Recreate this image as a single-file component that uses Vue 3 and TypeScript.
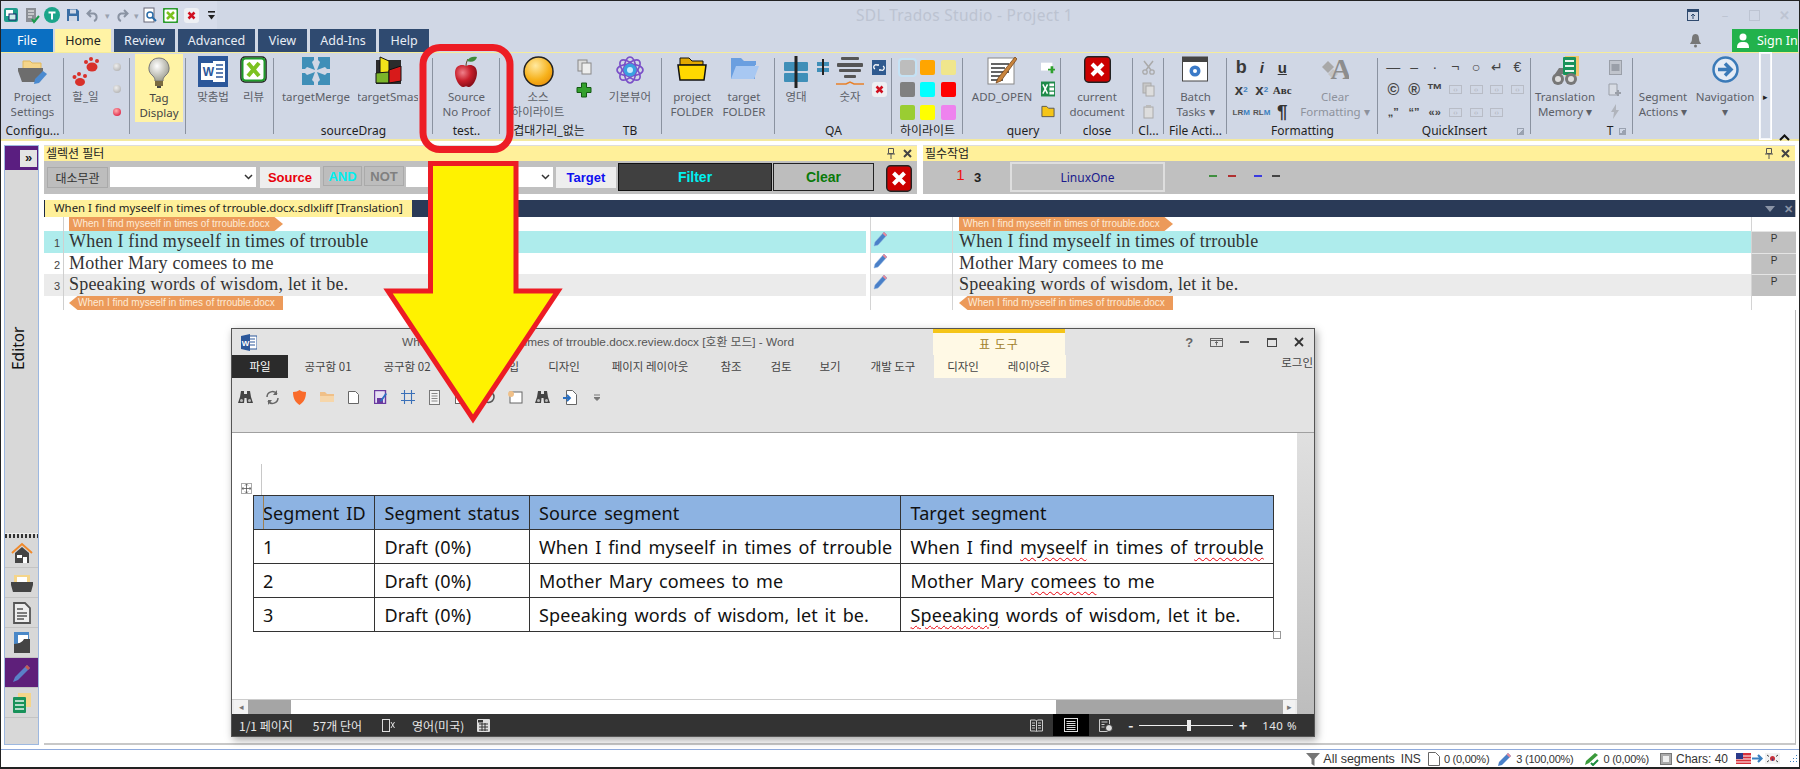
<script setup lang="ts">
const qi2 = ['©', '®', '™']
const qi1 = ['—', '–', '·', '¬', '○', '↵', '€']
const colors = ['#bdbdbd', '#ffa500', '#f0e68c', '#808080', '#00ffff', '#ff0000', '#9acd32', '#ffff00', '#ee82ee']
const flowerAngles = [0, 45, 90, 135]
const rows = [
  { n: 1, src: 'When I find myseelf in times of trrouble', cls: 'cur' },
  { n: 2, src: 'Mother Mary comees to me', cls: '' },
  { n: 3, src: 'Speeaking words of wisdom, let it be.', cls: 'alt' },
]
const tagText = 'When I find myseelf in times of trrouble.docx'
const wordTabs = [
  { t: '공구함 01', c: 'wt80' }, { t: '공구함 02', c: 'wt78' }, { t: '삽입', c: 'wt76 wr' },
  { t: '디자인', c: 'wt84' }, { t: '페이지 레이아웃', c: 'wt88' }, { t: '참조', c: 'wt74' },
  { t: '검토', c: 'wt26' }, { t: '보기', c: 'wt72' }, { t: '개발 도구', c: 'wt54' },
]
</script>

<template>
  <div class="app">
    <header class="titlebar">
      <div class="qat">
        <span class="q"><svg width="16" height="16" viewBox="0 0 16 16"><rect x="1" y="1" width="14" height="14" rx="2" fill="#1f9c8c"/><rect x="3" y="3" width="7" height="6" fill="#fff"/><rect x="6" y="7" width="7" height="6" fill="#cdeee8" stroke="#126"/></svg></span>
        <span class="q"><svg width="16" height="17" viewBox="0 0 16 17"><rect x="2" y="1" width="10" height="14" fill="#8b8f96"/><path d="M4 4h6M4 7h6M4 10h4" stroke="#fff"/><path d="M8 12l2 3 5-6" stroke="#1b9c4e" stroke-width="2" fill="none"/></svg></span>
        <span class="q"><svg width="16" height="16" viewBox="0 0 16 16"><circle cx="8" cy="8" r="8" fill="#1ba58a"/><path d="M4.500 4.500h7v2H9v6H7v-6H4.500z" fill="#fff"/></svg></span>
        <span class="q"><svg width="14" height="14" viewBox="0 0 14 14"><path d="M1 1h10l2 2v10H1z" fill="#3a6ea5"/><rect x="4" y="1.500" width="6" height="4" fill="#d0d7e5"/><rect x="3" y="8" width="8" height="5" fill="#d0d7e5"/></svg></span>
        <span class="q"><svg width="14" height="14" viewBox="0 0 14 14"><path d="M5 2L1.500 5.500 5 9M2 5.500h6a4 4 0 0 1 0 7.500" stroke="#8a93a3" stroke-width="2" fill="none"/></svg></span>
        <span class="q q-s">▾</span>
        <span class="q"><svg width="14" height="14" viewBox="0 0 14 14"><path d="M9 2l3.500 3.500L9 9M12 5.500H6a4 4 0 0 0 0 7.500" stroke="#8a93a3" stroke-width="2" fill="none"/></svg></span>
        <span class="q q-s">▾</span>
        <span class="q"><svg width="16" height="16" viewBox="0 0 16 16"><rect x="2" y="1" width="10" height="14" fill="#fff" stroke="#667"/><circle cx="8" cy="8" r="3" fill="none" stroke="#2a6ca8" stroke-width="1.500"/><path d="M10 10l4 4" stroke="#2a6ca8" stroke-width="2"/></svg></span>
        <span class="q"><svg width="15" height="15" viewBox="0 0 15 15"><rect x=".5" y=".5" width="14" height="14" rx="2" fill="#fff" stroke="#2c9b2c" stroke-width="2"/><path d="M4 4l7 7M11 4l-7 7" stroke="#7cc220" stroke-width="2.500"/></svg></span>
        <span class="q"><svg width="15" height="15" viewBox="0 0 15 15"><rect width="15" height="15" rx="3" fill="#eef0f4"/><path d="M4.500 4.500l6 6M10.500 4.500l-6 6" stroke="#d01020" stroke-width="2.500"/></svg></span>
        <span class="q"><svg width="7" height="9" viewBox="0 0 7 9"><rect y="0" width="7" height="1.600" fill="#222"/><path d="M0 4h7L3.500 8.500z" fill="#222"/></svg></span>
      </div>
      <div class="app-title">SDL Trados Studio - Project 1</div>
      <div class="win-btns">
        <svg class="w-pin" width="12" height="12" viewBox="0 0 12 12"><rect x=".5" y=".5" width="11" height="11" fill="none" stroke="#2f4a6e"/><rect x=".5" y=".5" width="11" height="2.500" fill="#2f4a6e"/><path d="M6 10V5M4 7l2-2 2 2" stroke="#2f4a6e" fill="none"/></svg>
        <span class="w-b">–</span>
        <span class="w-b w-box"></span>
        <span class="w-b w-x">✕</span>
      </div>
    </header>

    <nav class="tabs">
      <span class="tab file">File</span>
      <span class="tab home">Home</span>
      <span class="tab t-review">Review</span>
      <span class="tab t-adv">Advanced</span>
      <span class="tab t-view">View</span>
      <span class="tab t-add">Add-Ins</span>
      <span class="tab t-help">Help</span>
      <svg class="bell" width="13" height="15" viewBox="0 0 13 15"><path d="M6.500 1c-3 0-3.500 3-3.500 5 0 3-2 4-2 5h11c0-1-2-2-2-5 0-2-.5-5-3.500-5z" fill="#777"/><circle cx="6.500" cy="13" r="1.500" fill="#777"/></svg>
      <span class="signin">
        <svg width="12" height="15" viewBox="0 0 12 15"><circle cx="6" cy="4" r="3.500" fill="#fff"/><path d="M0 15c0-5 2-6 6-6s6 1 6 6z" fill="#fff"/></svg>
        <span>Sign In</span>
      </span>
    </nav>

    <section class="ribbon">
      <div class="grp g1 sep">
        <div class="body c">
          <div class="big">
            <div class="ico"><svg width="30" height="30" viewBox="0 0 30 30"><path d="M6 5h7l2 2h9v8H6z" fill="#f5d58a" stroke="#e0b860"/><path d="M1 12h25v3l-3 11H5L1 15z" fill="#6d6d6d"/><path d="M26 15l4 3-8 9-5 1 1-5z" fill="#4a8ad0"/></svg></div>
            <span>Project</span><span>Settings</span>
          </div>
        </div>
        <div class="glabel">Configu...</div>
      </div>

      <div class="grp g2 sep">
        <div class="body">
          <div class="big w43">
            <div class="ico"><svg width="28" height="32" viewBox="0 0 28 32"><g fill="#d8302a"><ellipse cx="20" cy="11" rx="5.500" ry="4.500"/><circle cx="14" cy="6" r="2"/><circle cx="19" cy="3" r="2"/><circle cx="25" cy="5" r="2"/></g><g fill="#d8302a"><ellipse cx="8" cy="26" rx="5" ry="4"/><circle cx="2.500" cy="21" r="2"/><circle cx="7" cy="18" r="2"/><circle cx="13" cy="20" r="2"/></g></svg></div>
            <span>할_일</span>
          </div>
          <div class="small w20">
            <i class="cell"><b class="led"></b></i>
            <i class="cell"><b class="led"></b></i>
            <i class="cell"><b class="led on"></b></i>
          </div>
        </div>
      </div>

      <div class="grp g3 sep">
        <div class="body tagbody">
          <div class="big tagbtn">
            <div class="ico"><svg width="22" height="32" viewBox="0 0 22 32"><defs><radialGradient id="bulb" cx=".4" cy=".35" r=".7"><stop offset="0" stop-color="#fff"/><stop offset="1" stop-color="#9a9a8c"/></radialGradient></defs><path d="M11 1a10 10 0 0 0-6 18c1.500 1.500 2 3 2 5h8c0-2 .5-3.500 2-5a10 10 0 0 0-6-18z" fill="url(#bulb)" stroke="#777"/><rect x="7" y="24" width="8" height="5" fill="#7a6a40"/><rect x="9" y="29" width="4" height="2" fill="#444"/></svg></div>
            <span>Tag</span><span>Display</span>
          </div>
        </div>
      </div>

      <div class="grp g4 sep">
        <div class="body">
          <div class="big w54">
            <div class="ico"><svg width="30" height="31" viewBox="0 0 30 31"><rect width="30" height="31" fill="#2b579a"/><rect x="15" y="5" width="12" height="21" fill="#fff"/><path d="M17 9h8M17 13h8M17 17h8M17 21h8" stroke="#2b579a" stroke-width="1.500"/><rect x="3" y="7" width="15" height="17" fill="#fff"/><text x="10.500" y="20" font-size="12" font-weight="700" fill="#2b579a" text-anchor="middle" font-family="Liberation Sans">W</text></svg></div>
            <span>맞춤법</span>
          </div>
          <div class="big w27">
            <div class="ico"><svg width="27" height="27" viewBox="0 0 27 27"><rect x="1" y="1" width="25" height="25" rx="4" fill="#fff" stroke="#1a1a1a" stroke-width="1.500"/><rect x="2.500" y="2.500" width="22" height="22" rx="3" fill="#fff" stroke="#1f9c2a" stroke-width="2"/><path d="M8 7l11 13M19 7L8 20" stroke="#7cc220" stroke-width="4"/></svg></div>
            <span>리뷰</span>
          </div>
        </div>
      </div>

      <div class="grp g5 sep">
        <div class="body">
          <div class="big w84">
            <div class="ico"><svg width="30" height="30" viewBox="0 0 30 30"><g fill="#3f8fb8"><path d="M1 1h12v3l-2 2 3 8-8-3-2 2H1z"/><path d="M29 1H17v3l2 2-3 8 8-3 2 2h3z"/><path d="M1 29h12v-3l-2-2 3-8-8 3-2-2H1z"/><path d="M29 29H17v-3l2-2-3-8 8 3 2-2h3z"/></g></svg></div>
            <span>targetMerge</span>
          </div>
          <div class="big w60">
            <div class="ico"><svg width="27" height="29" viewBox="0 0 27 29"><rect x="1" y="4" width="25" height="24" fill="#2c2c2c"/><path d="M5 1l9 4v12l-9 1z" fill="#f2e21a" stroke="#111"/><path d="M1 17l13-1v11H1z" fill="#7bb52a" stroke="#111"/><path d="M14 14l12-4v15l-12 2z" fill="#d81a1a" stroke="#111"/></svg></div>
            <span>targetSmas</span>
          </div>
        </div>
        <div class="glabel">sourceDrag</div>
      </div>

      <div class="grp g6 sep">
        <div class="body c">
          <div class="big">
            <div class="ico"><svg width="24" height="32" viewBox="0 0 24 32"><defs><radialGradient id="apple" cx=".35" cy=".35" r=".75"><stop offset="0" stop-color="#f0808a"/><stop offset=".5" stop-color="#c81e2a"/><stop offset="1" stop-color="#7a0a14"/></radialGradient></defs><path d="M12 10c-3-2-11-2-11 7 0 7 5 14 8 14 1 0 2-.8 3-.8s2 .8 3 .8c3 0 8-7 8-14 0-9-8-9-11-7z" fill="url(#apple)"/><path d="M12 10c0-3 1-5 2-7" stroke="#5a3a1a" fill="none"/><path d="M13 5c2-4 6-5 10-4-1 4-5 6-10 4z" fill="#3f8a3a"/></svg></div>
            <span>Source</span><span>No Proof</span>
          </div>
        </div>
        <div class="glabel">test..</div>
      </div>

      <div class="grp g7">
        <div class="body">
          <div class="big w76">
            <div class="ico"><svg width="31" height="31" viewBox="0 0 31 31"><defs><radialGradient id="sun" cx=".4" cy=".3" r=".8"><stop offset="0" stop-color="#ffe9a0"/><stop offset=".6" stop-color="#f7b21c"/><stop offset="1" stop-color="#e58a08"/></radialGradient></defs><circle cx="15.500" cy="15.500" r="14.500" fill="url(#sun)" stroke="#222" stroke-width="1.500"/></svg></div>
            <span>소스</span><span>하이라이트</span>
          </div>
          <div class="small w16">
            <i class="cell"><svg width="15" height="16" viewBox="0 0 15 16"><rect x="1" y="1" width="9" height="11" fill="#ddd" stroke="#888"/><rect x="5" y="4" width="9" height="11" fill="#eee" stroke="#888"/></svg></i>
            <i class="cell"><svg width="16" height="16" viewBox="0 0 16 16"><path d="M5.500 1h5v4.500H15v5h-4.500V15h-5v-4.500H1v-5h4.500z" fill="#33a02c" stroke="#145a14"/></svg></i>
          </div>
        </div>
        <div class="glabel pr7">겹대가리_없는</div>
      </div>

      <div class="grp g8 sep">
        <div class="body c pr7">
          <div class="big">
            <div class="ico"><svg width="28" height="28" viewBox="-14 -14 28 28"><ellipse v-for="a in flowerAngles" :key="a" rx="13" ry="6" fill="none" stroke="#7a4fc8" stroke-width="1.600" :transform="`rotate(${a})`"/><circle r="6.500" fill="#3aa0e0"/><circle r="3" fill="#c8ecff"/></svg></div>
            <span>기본뷰어</span>
          </div>
        </div>
        <div class="glabel pr7">TB</div>
      </div>

      <div class="grp g9 sep">
        <div class="body">
          <div class="big w60">
            <div class="ico"><svg width="30" height="26" viewBox="0 0 30 26"><path d="M3 2h9l3 3h11v4H3z" fill="#e2a800" stroke="#111"/><path d="M1 9h28l-2 15H3z" fill="#ffd800" stroke="#111" stroke-width="1.500"/></svg></div>
            <span>project</span><span>FOLDER</span>
          </div>
          <div class="big w44">
            <div class="ico"><svg width="30" height="26" viewBox="0 0 30 26"><path d="M2 2h10l3 3h12v4H2z" fill="#6a9fe0"/><rect x="2" y="5" width="24" height="18" fill="#6a9fe0"/><path d="M7 10h23l-5 13H2z" fill="#a8c8f2"/></svg></div>
            <span>target</span><span>FOLDER</span>
          </div>
        </div>
      </div>

      <div class="grp g10 sep">
        <div class="body">
          <div class="big w42">
            <div class="ico"><svg width="24" height="32" viewBox="0 0 24 32"><rect y="6" width="24" height="9" rx="1" fill="#3f8fb8"/><rect y="17" width="24" height="9" rx="1" fill="#3f8fb8"/><rect x="10.500" width="3" height="32" fill="#222"/></svg></div>
            <span>영대</span>
          </div>
          <div class="small w12">
            <i class="cell"><svg width="12" height="16" viewBox="0 0 12 16"><rect y="3" width="12" height="4" fill="#3f8fb8"/><rect y="9" width="12" height="4" fill="#3f8fb8"/><rect x="5" width="2" height="16" fill="#222"/></svg></i>
          </div>
          <div class="big w42">
            <div class="ico"><svg width="28" height="32" viewBox="0 0 28 32"><g fill="#555"><rect x="5" y="1" width="18" height="3" rx="1"/><rect x="1" y="7" width="26" height="4" rx="1"/><rect x="3" y="13" width="22" height="3" rx="1"/><rect x="8" y="19" width="12" height="3" rx="1"/></g><path d="M0 28h10l4-2 4 2h10" stroke="#e8812a" stroke-width="1.500" fill="none"/></svg></div>
            <span>숫자</span>
          </div>
          <div class="small w16">
            <i class="cell"><svg width="14" height="15" viewBox="0 0 14 15"><rect width="14" height="15" fill="#2f5a8f"/><path d="M3 9a2 2 0 0 1 2-4h2M11 6a2 2 0 0 1-2 4H7" stroke="#fff" fill="none" stroke-width="1.300"/></svg></i>
            <i class="cell"><svg width="15" height="15" viewBox="0 0 15 15"><rect width="15" height="15" rx="3" fill="#eef0f4"/><path d="M4.500 4.500l6 6M10.500 4.500l-6 6" stroke="#d01020" stroke-width="2.500"/></svg></i>
          </div>
        </div>
        <div class="glabel">QA</div>
      </div>

      <div class="grp g11 sep">
        <div class="body">
          <div class="swatches">
            <span v-for="(c, i) in colors" :key="i" class="sw" :class="{ first: i === 0 }"><b :style="{ background: c }"></b></span>
          </div>
        </div>
        <div class="glabel">하이라이트</div>
      </div>

      <div class="grp g12 sep">
        <div class="body">
          <div class="big w78">
            <div class="ico"><svg width="30" height="30" viewBox="0 0 30 30"><rect x="1" y="2" width="26" height="26" fill="#fff" stroke="#888"/><path d="M4 8h18M4 12h14M4 16h18M4 20h10M4 24h12" stroke="#333" stroke-width="1.300"/><path d="M28 1L11 22l-2 5 5-2L30 3z" fill="#c8843c" stroke="#6a3a10" stroke-width=".7"/></svg></div>
            <span>ADD_OPEN</span>
          </div>
          <div class="small w14">
            <i class="cell"><svg width="16" height="13" viewBox="0 0 16 13"><rect y="1" width="13" height="9" fill="#fff"/><path d="M11 5h3v3h2v2h-2v3h-3v-3H8V8h3z" fill="#2ea02e"/></svg></i>
            <i class="cell"><svg width="15" height="16" viewBox="0 0 15 16"><rect width="15" height="16" fill="#1e8a4a"/><path d="M2 3l5 10M7 3L2 13" stroke="#fff" stroke-width="1.600"/><path d="M9 2h5v3H9zm0 4.500h5v3H9zM9 11h5v3H9z" fill="#fff"/></svg></i>
            <i class="cell"><svg width="15" height="13" viewBox="0 0 15 13"><path d="M1 1h5l2 2h6v9H1z" fill="#f5c518" stroke="#555"/></svg></i>
          </div>
        </div>
        <div class="glabel lp22">query</div>
      </div>

      <div class="grp g13 sep">
        <div class="body c">
          <div class="big">
            <div class="ico"><svg width="27" height="27" viewBox="0 0 27 27"><rect x=".7" y=".7" width="25.600" height="25.600" rx="4" fill="#cc0000" stroke="#222" stroke-width="1.400"/><path d="M8 8l11 11M19 8L8 19" stroke="#fff" stroke-width="4"/></svg></div>
            <span>current</span><span>document</span>
          </div>
        </div>
        <div class="glabel">close</div>
      </div>

      <div class="grp g14 sep">
        <div class="body c">
          <div class="small">
            <i class="cell"><svg width="13" height="15" viewBox="0 0 13 15"><path d="M2 1l7 9M11 1L4 10" stroke="#aaa" stroke-width="1.500"/><circle cx="3" cy="12" r="2.200" fill="none" stroke="#aaa" stroke-width="1.300"/><circle cx="10" cy="12" r="2.200" fill="none" stroke="#aaa" stroke-width="1.300"/></svg></i>
            <i class="cell"><svg width="13" height="15" viewBox="0 0 13 15"><rect x="1" y="1" width="8" height="10" fill="#c8c8c8" stroke="#aaa"/><rect x="4" y="4" width="8" height="10" fill="#ddd" stroke="#aaa"/></svg></i>
            <i class="cell"><svg width="13" height="15" viewBox="0 0 13 15"><rect x="2" y="3" width="9" height="11" fill="#ddd" stroke="#aaa"/><rect x="4" y="1" width="5" height="3" fill="#bbb"/></svg></i>
          </div>
        </div>
        <div class="glabel">Cl...</div>
      </div>

      <div class="grp g15 sep">
        <div class="body c">
          <div class="big">
            <div class="ico"><svg width="26" height="26" viewBox="0 0 26 26"><rect x=".5" y="1" width="25" height="24" fill="#fff" stroke="#444"/><rect x=".5" y="1" width="25" height="5" fill="#444"/><circle cx="13" cy="15" r="5.500" fill="#3a7ac8"/><circle cx="13" cy="15" r="2" fill="#fff"/></svg></div>
            <span>Batch</span><span>Tasks ▾</span>
          </div>
        </div>
        <div class="glabel">File Acti...</div>
      </div>

      <div class="grp g16 sep">
        <div class="body">
          <div class="fmt">
            <i class="cell fb b1">b</i><i class="cell fi">i</i><i class="cell fu">u</i>
            <i class="cell fb">x<sup>2</sup></i><i class="cell fb">x<sub>2</sub></i><i class="cell fa">Aʙc</i>
            <i class="cell fl">LR<u>M</u></i><i class="cell fl">RL<u>M</u></i><i class="cell fp">¶</i>
          </div>
          <div class="big w86 dis">
            <div class="ico"><svg width="28" height="27" viewBox="0 0 28 27"><path d="M7 5l6 6-6 6-6-6z" fill="#a8a8a8"/><path d="M12 13l5 5-5 5-5-5z" fill="#c4c4c4"/><text x="20" y="23" font-size="29" font-weight="700" fill="#8d8d8d" text-anchor="middle" font-family="Liberation Serif">A</text></svg></div>
            <span>Clear</span><span>Formatting ▾</span>
          </div>
        </div>
        <div class="glabel lpn">Formatting</div>
      </div>

      <div class="grp g17 sep">
        <div class="body">
          <div class="qi">
            <i v-for="g in qi1" :key="g" class="cell qg">{{ g }}</i>
            <i v-for="g in qi2" :key="g" class="cell qc">{{ g }}</i>
            <i v-for="n in 4" :key="'a' + n" class="cell"><b class="mini">‹›</b></i>
            <i class="cell qq">„”</i><i class="cell qq">“”</i><i class="cell qq">«»</i>
            <i v-for="n in 3" :key="'b' + n" class="cell"><b class="mini">‹›</b></i>
          </div>
        </div>
        <div class="glabel">QuickInsert</div>
        <span class="launch"></span>
      </div>

      <div class="grp g18 sep">
        <div class="body">
          <div class="big w68">
            <div class="ico"><svg width="28" height="30" viewBox="0 0 28 30"><rect x="14" y="0" width="14" height="20" fill="#f2c66a"/><rect x="12" y="1" width="13" height="18" rx="1" fill="#18925a"/><path d="M14 5h9M14 10h9M14 15h9" stroke="#e8f5ee" stroke-width="2"/><circle cx="7" cy="23" r="6" fill="#777"/><circle cx="20" cy="23" r="6" fill="#777"/><circle cx="7" cy="23" r="3" fill="#ddd"/><circle cx="20" cy="23" r="3" fill="#ddd"/><path d="M4 18l4-6h4v6z" fill="#777"/></svg></div>
            <span>Translation</span><span>Memory ▾</span>
          </div>
          <div class="small w32">
            <i class="cell"><svg width="13" height="15" viewBox="0 0 13 15"><rect x=".5" y=".5" width="12" height="14" fill="#c0c4cc" stroke="#9a9fa8"/><rect x="2.500" y="4" width="8" height="7" fill="#9a9fa8"/></svg></i>
            <i class="cell"><svg width="14" height="15" viewBox="0 0 14 15"><path d="M1 2h8v11H1z" fill="#d8dce4" stroke="#9a9fa8"/><path d="M9 8h2v2h2v2h-2v2H9v-2H7v-2h2z" fill="#9a9fa8"/></svg></i>
            <i class="cell"><svg width="10" height="15" viewBox="0 0 10 15"><path d="M6 0L1 8h3l-1 7 6-9H6z" fill="#b0b4bc"/></svg></i>
          </div>
        </div>
        <div class="glabel tlabel">T</div>
        <span class="launch"></span>
      </div>

      <div class="grp g19">
        <div class="body">
          <div class="big w60">
            <div class="ico"></div>
            <span>Segment</span><span>Actions ▾</span>
          </div>
          <div class="big w64">
            <div class="ico"><svg width="27" height="27" viewBox="0 0 27 27"><circle cx="13.500" cy="13.500" r="12" fill="#e4ebf5" stroke="#3a7ab8" stroke-width="2.500"/><path d="M6 13.500h12M13 7.500l6 6-6 6" fill="none" stroke="#3a7ab8" stroke-width="3.500"/></svg></div>
            <span>Navigation</span><span>▾</span>
          </div>
        </div>
      </div>

      <div class="scroller"><span>▸</span></div>
      <div class="collapse"><svg width="11" height="7" viewBox="0 0 11 7"><path d="M1 6l4.500-4.500L10 6" fill="none" stroke="#111" stroke-width="2"/></svg></div>
    </section>

    <main class="workspace">
      <aside class="sidebar">
        <div class="side-top"><span class="expand">»</span></div>
        <div class="side-mid"><span class="editor">Editor</span></div>
        <div class="grip"></div>
        <div class="side-item"><svg width="22" height="22" viewBox="0 0 22 22"><path d="M1 11L11 2l10 9" fill="none" stroke="#f08a2c" stroke-width="2"/><path d="M4 11l7-6 7 6v10H4z" fill="#444"/><rect x="6" y="13" width="5" height="3" fill="#fff"/><rect x="12" y="15" width="4" height="6" fill="#fff"/></svg></div>
        <div class="side-item"><svg width="22" height="20" viewBox="0 0 22 20"><path d="M3 2h16v8H3z" fill="#f5d58a"/><rect x="6" y="4" width="10" height="5" fill="#fff"/><path d="M0 9h22v3l-2 7H2L0 12z" fill="#444"/></svg></div>
        <div class="side-item"><svg width="18" height="22" viewBox="0 0 18 22"><path d="M1 1h11l5 5v15H1z" fill="#eee" stroke="#555" stroke-width="1.800"/><path d="M4 7h6M4 11h10M4 14h10M4 17h7" stroke="#555" stroke-width="1.400"/></svg></div>
        <div class="side-item"><svg width="16" height="21" viewBox="0 0 16 21"><rect width="15" height="14" fill="#4a88c8"/><rect x="4" y="3" width="10" height="8" fill="#fff"/><path d="M0 21V12c6 0 9-3 10-5h6v14z" fill="#444"/></svg></div>
        <div class="side-item active"><svg width="20" height="20" viewBox="0 0 20 20"><path d="M15 2l3 3L6 17l-5 2 2-5z" fill="#5a80c8"/><path d="M15 2l3 3-2 2-3-3z" fill="#c85a50"/></svg></div>
        <div class="side-item"><svg width="18" height="20" viewBox="0 0 18 20"><rect x="5" y="0" width="13" height="14" fill="#f5d58a"/><rect y="4" width="13" height="16" rx="1" fill="#18925a"/><path d="M2 8h9M2 12h9M2 16h9" stroke="#e8f5ee" stroke-width="1.600"/></svg></div>
        <div class="side-end"></div>
      </aside>

      <div class="content">
        <div class="panels">
          <section class="panel">
            <div class="p-head"><span>셀렉션 필터</span><span class="p-ctl"><svg width="8" height="11" viewBox="0 0 8 11"><path d="M1.500.5h5v5h-5zM0 6h8M4 6v5" fill="none" stroke="#555"/></svg><svg width="9" height="9" viewBox="0 0 9 9"><path d="M1 1l7 7M8 1L1 8" stroke="#444" stroke-width="2"/></svg></span></div>
            <div class="p-body">
              <span class="fbtn case">대소무관</span>
              <span class="sel s1"><svg width="9" height="6" viewBox="0 0 9 6"><path d="M1 1l3.500 3.500L8 1" fill="none" stroke="#333" stroke-width="1.500"/></svg></span>
              <span class="fbtn src">Source</span>
              <span class="fbtn and">AND</span>
              <span class="fbtn not">NOT</span>
              <span class="sel s2"><svg width="9" height="6" viewBox="0 0 9 6"><path d="M1 1l3.500 3.500L8 1" fill="none" stroke="#333" stroke-width="1.500"/></svg></span>
              <span class="fbtn tgt">Target</span>
              <span class="fbtn run">Filter</span>
              <span class="fbtn clr">Clear</span>
              <svg class="fx" width="26" height="27" viewBox="0 0 26 27"><rect x=".7" y=".7" width="24.600" height="25.600" rx="4" fill="#cc0000" stroke="#222" stroke-width="1.400"/><path d="M7.500 8l11 11M18.500 8l-11 11" stroke="#fff" stroke-width="4"/></svg>
            </div>
          </section>
          <section class="panel p2">
            <div class="p-head"><span>필수작업</span><span class="p-ctl"><svg width="8" height="11" viewBox="0 0 8 11"><path d="M1.500.5h5v5h-5zM0 6h8M4 6v5" fill="none" stroke="#555"/></svg><svg width="9" height="9" viewBox="0 0 9 9"><path d="M1 1l7 7M8 1L1 8" stroke="#444" stroke-width="2"/></svg></span></div>
            <div class="p-body pb2">
              <span class="one">1</span><span class="three">3</span>
              <span class="linux">LinuxOne</span>
              <span class="dash d1"></span><span class="dash d2"></span><span class="dash d3"></span><span class="dash d4"></span>
            </div>
          </section>
        </div>

        <div class="doc">
          <div class="doc-bar">
            <span class="doc-tab">When I find myseelf in times of trrouble.docx.sdlxliff [Translation]</span>
            <span class="doc-ctl"><svg width="10" height="6" viewBox="0 0 10 6"><path d="M0 0h10L5 6z" fill="#8a94a6"/></svg><b>✕</b></span>
          </div>
          <div class="grid">
            <div class="seg tagrow">
              <span class="num"></span>
              <span class="srcc"><em class="tag right">{{ tagText }}</em></span>
              <span class="gapc"></span><span class="stc"></span>
              <span class="tgtc"><em class="tag right">{{ tagText }}</em></span>
              <span class="pc blank"></span>
            </div>
            <div v-for="r in rows" :key="r.n" class="seg trow" :class="r.cls">
              <span class="num">{{ r.n }}</span>
              <span class="srcc">{{ r.src }}</span>
              <span class="gapc"></span>
              <span class="stc"><svg width="15" height="16" viewBox="0 0 15 16"><path d="M11 1l3 3L5 14l-4 1 1-4z" fill="#4a80c8" stroke="#8ab0e0" stroke-width=".5"/><path d="M11 1l3 3-1.500 1.500-3-3z" fill="#e88a9a"/></svg></span>
              <span class="tgtc">{{ r.src }}</span>
              <span class="pc">P</span>
            </div>
            <div class="seg tagrow">
              <span class="num"></span>
              <span class="srcc"><em class="tag left">{{ tagText }}</em></span>
              <span class="gapc"></span><span class="stc"></span>
              <span class="tgtc"><em class="tag left">{{ tagText }}</em></span>
              <span class="pc blank"></span>
            </div>
          </div>
        </div>
      </div>
    </main>

    <footer class="status">
      <svg class="s-funnel" width="14" height="14" viewBox="0 0 14 14"><path d="M0 1h14L8.500 7v7l-3-2V7z" fill="#777"/></svg>
      <span class="s-all">All segments</span>
      <span class="s-ins">INS</span>
      <svg class="s-doc" width="12" height="14" viewBox="0 0 12 14"><path d="M.5.500h7l4 4v9H.5z" fill="#fff" stroke="#666"/></svg>
      <span class="s-t">0 (0,00%)</span>
      <svg class="s-p1" width="14" height="14" viewBox="0 0 14 14"><path d="M10 1l3 3L4 13l-4 1 1-4z" fill="#4a80c8"/><path d="M10 1l3 3-1.500 1.500-3-3z" fill="#e88a9a"/></svg>
      <span class="s-t">3 (100,00%)</span>
      <svg class="s-p2" width="15" height="14" viewBox="0 0 15 14"><path d="M10 1l3 2L4 11l-4 2 1-4z" fill="#3a9a3a"/><path d="M6 11l2 2 5-5" fill="none" stroke="#1b8c3e" stroke-width="2"/></svg>
      <span class="s-t">0 (0,00%)</span>
      <svg class="s-box" width="12" height="12" viewBox="0 0 12 12"><rect x=".5" y=".5" width="11" height="11" fill="#aaa" stroke="#777"/><rect x="3" y="3" width="6" height="6" fill="#eee"/></svg>
      <span class="s-chars">Chars: 40</span>
      <svg class="s-flags" width="44" height="11" viewBox="0 0 44 11"><rect width="15" height="11" fill="#d8303a"/><path d="M0 3h15M0 6h15M0 9h15" stroke="#fff"/><rect width="7" height="6" fill="#2a3a8a"/><path d="M16 5.500h9M22 2l3.500 3.500L22 9" fill="none" stroke="#3a80c0" stroke-width="2.200"/><rect x="29" width="15" height="11" fill="#f2f2f2"/><circle cx="36.500" cy="5.500" r="2.500" fill="#c8303a"/><path d="M36.500 5.500a2.500 2.500 0 0 1 0 2.500" stroke="#2a4a9a"/><path d="M31 2l2 1.500M42 2l-2 1.500M31 9l2-1.500M42 9l-2-1.500" stroke="#444"/></svg>
      <svg class="s-grip" width="9" height="9" viewBox="0 0 9 9"><path d="M7 1h1v1H7zM4 4h1v1H4zM7 4h1v1H7zM1 7h1v1H1zM4 7h1v1H4zM7 7h1v1H7z" fill="#3a80c0"/></svg>
    </footer>

    <!-- Word window floating over the editor -->
    <div class="word">
      <div class="w-title">
        <svg class="w-ic" width="16" height="17" viewBox="0 0 16 17"><rect x="5" y="2" width="11" height="13" fill="#fff" stroke="#2b579a"/><path d="M8 5h6M8 8h6M8 11h6" stroke="#2b579a"/><path d="M0 2l9-2v17l-9-2z" fill="#2b579a"/><text x="4.500" y="11.500" font-size="8" font-weight="700" fill="#fff" text-anchor="middle" font-family="Liberation Sans">W</text></svg>
        <span class="w-name">When I find myseelf in times of trrouble.docx.review.docx [호환 모드] - Word</span>
        <span class="w-ctx">표 도구</span>
        <span class="w-ctrl">
          <i class="wq">?</i>
          <i><svg width="13" height="9" viewBox="0 0 13 9"><rect x=".5" y=".5" width="12" height="8" fill="none" stroke="#666"/><path d="M.5 2.500h12M6.500 7.500V4M5 5l1.500-1.500L8 5" stroke="#666" fill="none"/></svg></i>
          <i><svg width="9" height="2" viewBox="0 0 9 2"><rect width="9" height="2" fill="#555"/></svg></i>
          <i><svg width="10" height="9" viewBox="0 0 10 9"><rect x=".5" y=".5" width="9" height="8" fill="none" stroke="#444"/><rect width="10" height="2" fill="#444"/></svg></i>
          <i><svg width="10" height="10" viewBox="0 0 10 10"><path d="M1 1l8 8M9 1l-8 8" stroke="#333" stroke-width="1.800"/></svg></i>
        </span>
      </div>
      <div class="w-tabs">
        <span class="wfile">파일</span>
        <span v-for="t in wordTabs" :key="t.t" class="wt" :class="t.c">{{ t.t }}</span>
        <span class="wt wc1">디자인</span>
        <span class="wt wc2">레이아웃</span>
        <span class="wlogin">로그인</span>
      </div>
      <div class="w-tools">
        <i><svg width="15" height="14" viewBox="0 0 15 14"><path d="M3 1h3v3h3V1h3l1 6 2 6H9l-.5-5h-2L6 13H0l2-6z" fill="#444"/><circle cx="3.500" cy="10.500" r="1.500" fill="#bbb"/><circle cx="11.500" cy="10.500" r="1.500" fill="#bbb"/></svg></i>
        <i><svg width="15" height="15" viewBox="0 0 15 15"><path d="M2 7a5.500 5.500 0 0 1 10-3M13 8a5.500 5.500 0 0 1-10 3" fill="none" stroke="#666" stroke-width="1.500"/><path d="M12 0v5H8zM3 15v-5h4z" fill="#666"/></svg></i>
        <i><svg width="13" height="15" viewBox="0 0 13 15"><path d="M0 2c3 0 5-1 6.500-2C8 1 10 2 13 2c0 6-2 10-6.500 13C2 12 0 8 0 2z" fill="#f96b2b"/></svg></i>
        <i><svg width="16" height="12" viewBox="0 0 16 12"><path d="M1 1h5l2 2h7v8H1z" fill="#f0c088"/><path d="M1 5h14v6H1z" fill="#f6d6aa"/></svg></i>
        <i><svg width="11" height="13" viewBox="0 0 11 13"><path d="M.5.500h7l3 3v9H.5z" fill="#fff" stroke="#666"/></svg></i>
        <i><svg width="14" height="14" viewBox="0 0 14 14"><rect x=".5" y=".5" width="11" height="13" fill="#e8e0f4" stroke="#6a3aa0" stroke-width="1.400"/><rect x="3" y="8" width="6" height="5" fill="#6a3aa0"/><path d="M13 4l-5 7-2 1 .5-2 5-7z" fill="#2a6fc0"/></svg></i>
        <i><svg width="14" height="14" viewBox="0 0 14 14"><path d="M3.500 0v14M10.500 0v14M0 3.500h14M0 10.500h14" stroke="#3a70b8" stroke-width="1.100"/></svg></i>
        <i><svg width="11" height="15" viewBox="0 0 11 15"><rect x=".5" y=".5" width="10" height="14" fill="#f4f4f4" stroke="#777"/><path d="M2.500 3.500h6M2.500 6h6M2.500 8.500h6M2.500 11h6" stroke="#888"/></svg></i>
        <i><svg width="13" height="14" viewBox="0 0 13 14"><rect x=".5" y=".5" width="12" height="13" fill="#fff" stroke="#666"/></svg></i>
        <i><svg width="13" height="14" viewBox="0 0 13 14"><circle cx="6.500" cy="7" r="5.500" fill="none" stroke="#555" stroke-width="1.500"/></svg></i>
        <i><svg width="15" height="13" viewBox="0 0 15 13"><rect x="2" y="1" width="12" height="11" fill="#fff" stroke="#666"/><circle cx="3" cy="3" r="3" fill="#f0c088"/></svg></i>
        <i><svg width="15" height="14" viewBox="0 0 15 14"><path d="M3 1h3v3h3V1h3l1 6 2 6H9l-.5-5h-2L6 13H0l2-6z" fill="#444"/><circle cx="3.500" cy="10.500" r="1.500" fill="#bbb"/><circle cx="11.500" cy="10.500" r="1.500" fill="#bbb"/></svg></i>
        <i><svg width="14" height="15" viewBox="0 0 14 15"><path d="M3.500.500h6l4 4v10h-10z" fill="#fff" stroke="#666"/><path d="M0 8h6M4 5l3 3-3 3" fill="none" stroke="#2a6fc0" stroke-width="1.800"/></svg></i>
        <i class="tdrop"><svg width="6" height="7" viewBox="0 0 6 7"><path d="M0 1h6M0 3.500h6l-3 3z" stroke="#777" fill="#777"/></svg></i>
      </div>
      <div class="w-body">
        <div class="w-page">
          <div class="w-doc">
            <div class="w-margin"><span class="w-handle"><svg width="9" height="9" viewBox="0 0 9 9"><path d="M4.500 0v9M0 4.500h9M3 1.500L4.500 0 6 1.500M3 7.500L4.500 9 6 7.500M1.500 3L0 4.500 1.500 6M7.500 3L9 4.500 7.500 6" stroke="#555" fill="none" stroke-width=".8"/></svg></span></div>
            <table class="w-table">
              <colgroup><col class="c1"><col class="c2"><col class="c3"><col class="c4"></colgroup>
              <thead><tr><th><span class="caret"></span>Segment ID</th><th>Segment status</th><th>Source segment</th><th>Target segment</th></tr></thead>
              <tbody>
                <tr><td>1</td><td>Draft (0%)</td><td>When I find myseelf in times of trrouble</td><td>When I find <u>myseelf</u> in times of <u>trrouble</u></td></tr>
                <tr><td>2</td><td>Draft (0%)</td><td>Mother Mary comees to me</td><td>Mother Mary <u>comees</u> to me</td></tr>
                <tr><td>3</td><td>Draft (0%)</td><td>Speeaking words of wisdom, let it be.</td><td><u>Speeaking</u> words of wisdom, let it be.</td></tr>
              </tbody>
            </table>
            <span class="w-resize"></span>
          </div>
          <div class="w-scroll">
            <span class="sb-arrow">◂</span><span class="sb-thumb"></span><span class="sb-track"></span><span class="sb-rest"></span><span class="sb-arrow ar">▸</span>
          </div>
        </div>
        <div class="w-gutter"></div>
      </div>
      <div class="w-status">
        <span class="ws1">1/1 페이지</span>
        <span class="ws2">57개 단어</span>
        <svg class="ws3" width="13" height="13" viewBox="0 0 13 13"><rect x=".5" y=".5" width="7" height="12" fill="none" stroke="#ddd"/><path d="M9 3l3.500 6M12.500 3L9 9" stroke="#ddd"/></svg>
        <span class="ws4">영어(미국)</span>
        <svg class="ws5" width="13" height="13" viewBox="0 0 13 13"><rect width="13" height="13" rx="1" fill="#ddd"/><path d="M2 5h9M2 8h9M2 11h9M5 4v8M8 4v8" stroke="#333"/><rect x="1" y="1" width="5" height="2.500" fill="#333"/></svg>
        <span class="ws-right">
          <svg class="wsb" width="13" height="13" viewBox="0 0 13 13"><path d="M.5 1h5l1 1 1-1h5v11h-5l-1 1-1-1h-5zM6.500 2v10" fill="none" stroke="#ccc"/><path d="M2 4h3M2 6.500h3M2 9h3M8 4h3M8 6.500h3M8 9h3" stroke="#ccc"/></svg>
          <span class="wsact"><svg width="14" height="14" viewBox="0 0 14 14"><rect x=".5" y=".5" width="13" height="13" fill="none" stroke="#ddd"/><path d="M2.500 3.500h9M2.500 5.500h9M2.500 7.500h9M2.500 9.500h9M2.500 11.500h9" stroke="#ddd"/></svg></span>
          <svg class="wsw" width="14" height="13" viewBox="0 0 14 13"><path d="M.5.500h10v12H.5z" fill="none" stroke="#ccc"/><path d="M2.500 3h6M2.500 5.500h3M2.500 8h3" stroke="#ccc"/><circle cx="10" cy="9" r="3.500" fill="#ddd" stroke="#333"/></svg>
          <span class="wsm">-</span>
          <span class="wslider"><b></b></span>
          <span class="wsp">+</span>
          <span class="wsz">140 %</span>
        </span>
      </div>
    </div>

    <!-- Hand-drawn annotation over the screenshot -->
    <svg class="annot" width="1800" height="769" viewBox="0 0 1800 769">
      <rect x="423" y="47.500" width="87" height="102" rx="17" fill="none" stroke="#ed1c24" stroke-width="7"/>
      <path d="M430.500 163.500H516V291H558L473 419 388 291H430.500Z" fill="#fff200" stroke="#ed1c24" stroke-width="5" stroke-linejoin="miter"/>
    </svg>
  </div>
</template>

<style>
html, body { margin: 0; padding: 0; background: #fff; }
</style>

<style scoped>
* { box-sizing: border-box; }
i, em { font-style: normal; }
.app {
  position: relative; width: 1800px; height: 769px; overflow: hidden;
  border: 1px solid #222; border-bottom-width: 2px; border-top-width: 1px;
  display: flex; flex-direction: column; background: #fff;
  font-family: "Noto Sans", "Noto Sans CJK KR", sans-serif; color: #333;
}
.titlebar { height: 28px; flex: none; background: #d0d7e5; display: flex; align-items: center; position: relative; }
.qat { display: flex; align-items: center; height: 28px; width: 216px; background: #d6dcea; }
.q { width: 20.500px; display: flex; justify-content: center; flex: none; }
.q-s { width: 8px; font-size: 9px; color: #9aa2b0; }
.app-title { position: absolute; left: 855px; top: 3px; font-size: 15.500px; color: #bcc3d1; letter-spacing: .3px; }
.win-btns { margin-left: auto; display: flex; align-items: center; }
.w-pin { margin-right: 11px; }
.w-b { width: 30px; text-align: center; color: #bdc4d2; font-size: 13px; }
.w-box { width: 11px; height: 11px; border: 1.500px solid #bdc4d2; margin: 0 9px; }
.w-x { font-weight: 700; margin-right: 0; }

.tabs { height: 23px; flex: none; background: #d0d7e5; display: flex; align-items: stretch; font-size: 12.500px; }
.tab { display: flex; align-items: center; justify-content: center; color: #e8edf5; background: #2f4a70; flex: none; margin-right: 3px; }
.file { width: 52px; background: #0a6fc2; color: #fff; margin-right: 2px; }
.home { width: 56px; background: #fff3a5; color: #222; }
.t-review { width: 61px; } .t-adv { width: 77px; margin-left: 0; } .t-view { width: 49px; } .t-add { width: 66px; } .t-help { width: 50px; }
.bell { margin-left: auto; align-self: center; margin-right: 30px; }
.signin { width: 66px; margin-right: 1px; background: #22b24c; color: #fff; display: flex; align-items: center; gap: 8px; padding-left: 5px; font-size: 12.500px; white-space: nowrap; flex: none; }

.ribbon {
  height: 89px; flex: none; background: #d0d7e5; position: relative; display: flex;
  border-top: 1px solid #f5ec9a; border-bottom: 2px solid #f3e9a0; font-size: 11.500px; color: #5c6068;
}
.grp { display: flex; flex-direction: column; position: relative; height: 86px; flex: none; }
.sep::after { content: ""; position: absolute; right: 0; top: 5px; height: 76px; width: 1px; background: #8a92a0; }
.body { height: 70px; display: flex; padding-top: 3px; }
.c { justify-content: center; }
.pr7 { padding-right: 7px; }
.glabel { height: 16px; line-height: 16px; text-align: center; color: #1f1f1f; font-size: 12px; white-space: nowrap; }
.lp22 { padding-left: 22px; }
.lpn { padding-right: 0; }
.tlabel { padding-left: 56px; }
.g1 { width: 63px; } .g2 { width: 66px; } .g3 { width: 56px; } .g4 { width: 88px; } .g5 { width: 159px; }
.g6 { width: 67px; } .g7 { width: 105px; } .g8 { width: 57px; } .g9 { width: 113px; } .g10 { width: 117px; }
.g11 { width: 71px; } .g12 { width: 98px; } .g13 { width: 72px; } .g14 { width: 31px; } .g15 { width: 63px; }
.g16 { width: 151px; } .g17 { width: 153px; } .g18 { width: 102px; } .g19 { width: 127px; }
.big { display: flex; flex-direction: column; align-items: center; line-height: 15px; white-space: nowrap; flex: none; overflow: hidden; }
.big span { height: 15px; }
.ico { height: 33px; display: flex; align-items: flex-start; justify-content: center; flex: none; }
.w27 { width: 27px; } .w42 { width: 42px; } .w43 { width: 43px; } .w44 { width: 44px; } .w54 { width: 54px; } .w60 { width: 60px; }
.w64 { width: 64px; } .w68 { width: 68px; } .w76 { width: 76px; } .w78 { width: 78px; } .w84 { width: 84px; } .w86 { width: 86px; }
.w12 { width: 12px; } .w14 { width: 14px; } .w16 { width: 16px; } .w20 { width: 20px; } .w32 { width: 32px; }
.small { display: flex; flex-direction: column; flex: none; }
.cell { height: 22.500px; display: flex; align-items: center; justify-content: center; }
.led { width: 8px; height: 8px; border-radius: 50%; background: radial-gradient(circle at 40% 35%, #eee, #a5a5a5); display: block; }
.led.on { background: radial-gradient(circle at 40% 35%, #ffb0b0, #d8002a); }
.tagbody { padding-left: 5px; padding-top: 0; }
.tagbtn { width: 48px; height: 68px; padding-top: 3px; background: #fff3a5; color: #444; margin-top: 1px; }
.dis { color: #8d929c; }
.swatches { display: grid; grid-template-columns: repeat(3, 20.500px); grid-auto-rows: 22.500px; padding-left: 5px; }
.sw { display: flex; align-items: center; justify-content: center; }
.sw b { width: 15px; height: 15px; border-radius: 2px; display: block; }
.sw.first b { outline: 2px solid #c4e2f5; }
.fmt { display: grid; grid-template-columns: repeat(3, 20.500px); padding-left: 4px; color: #333; width: 65px; flex: none; }
.fb { font-weight: 700; font-size: 15px; font-family: "Liberation Sans", sans-serif; color: #3a3a3a; }
.b1 { font-size: 18px; }
.fb sup, .fb sub { font-size: 8px; color: #3a80c0; line-height: 0; }
.fi { font-style: italic; font-weight: 700; font-size: 15px; font-family: "Liberation Sans", sans-serif; }
.fu { text-decoration: underline; font-weight: 700; font-size: 15px; font-family: "Liberation Sans", sans-serif; }
.fa { font-size: 11px; font-weight: 700; font-family: "Liberation Serif", serif; }
.fl { font-size: 8px; font-weight: 700; color: #555; font-family: "Liberation Sans", sans-serif; }
.fl u { color: #3a80c0; text-decoration: none; }
.fp { font-size: 19px; font-weight: 700; font-family: "Liberation Sans", sans-serif; color: #333; }
.qi { display: grid; grid-template-columns: repeat(7, 20.700px); padding-left: 5px; color: #444; }
.qg { font-size: 14px; font-family: "Liberation Sans", sans-serif; }
.qc { font-size: 16px; font-weight: 700; font-family: "Liberation Sans", sans-serif; }
.qq { font-size: 11px; font-weight: 700; font-family: "Liberation Sans", sans-serif; }
.mini { width: 13px; height: 9px; border: 1px solid #b8bcc6; font-size: 7px; line-height: 7px; text-align: center; color: #b0b4be; font-weight: 400; display: block; }
.launch { position: absolute; right: 7px; bottom: 4px; width: 7px; height: 7px; border: 1px solid #9aa2b0; background: linear-gradient(135deg, transparent 50%, #9aa2b0 50%); }
.scroller { position: absolute; left: 1759px; top: 0; width: 11px; height: 86px; background: #d0d7e5; border: 1px solid #f4f6fa; box-shadow: 0 0 0 1px #fff; color: #222; font-size: 9px; display: flex; justify-content: center; padding-top: 36px; }
.collapse { position: absolute; left: 1778px; top: 76px; }

.workspace { flex: 1; display: flex; padding: 4px 3px 4px 3px; min-height: 0; }
.sidebar { width: 35px; flex: none; margin-right: 4px; border: 1px solid #9db8e0; background: #d8d8d8; display: flex; flex-direction: column; }
.side-top { height: 24px; background: #5a1e80; display: flex; justify-content: flex-end; align-items: center; padding-right: 1px; }
.expand { width: 17px; height: 17px; background: #e4e4e4; color: #222; font-size: 13px; font-weight: 700; line-height: 15px; text-align: center; font-family: "Liberation Sans", sans-serif; }
.side-mid { height: 363px; padding: 153px 7px 0 0; display: flex; justify-content: center; flex: none; }
.editor { writing-mode: vertical-rl; transform: rotate(180deg); font-size: 15.500px; color: #111; height: 50px; text-align: center; }
.grip { height: 5px; flex: none; background: repeating-linear-gradient(90deg, #333 0 2px, #d8d8d8 2px 4px); border-top: 1px solid #eee; }
.side-item { height: 30px; flex: none; display: flex; align-items: center; justify-content: center; border-bottom: 1px solid #c4c4c4; }
.side-item.active { background: #5e1f7a; }
.side-end { flex: 1; }

.content { flex: 1; display: flex; flex-direction: column; min-width: 0; }
.panels { display: flex; gap: 6px; height: 49px; flex: none; margin-left: 1px; margin-right: 1px; }
.panel { width: 873px; flex: none; display: flex; flex-direction: column; }
.p2 { flex: 1; width: auto; }
.p-head { height: 16px; background: #fff09a; color: #222; font-size: 12px; line-height: 15px; display: flex; justify-content: space-between; padding: 0 5px 0 2px; border-top: 1px solid #ddd; }
.p-ctl { display: flex; gap: 8px; align-items: center; }
.p-body { flex: 1; background: #c0c0c0; display: flex; align-items: flex-start; font-family: "Liberation Sans", sans-serif; }
.fbtn { display: flex; align-items: center; justify-content: center; flex: none; }
.case { width: 61px; height: 21px; margin: 6px 0 0 3px; background: #bdbdbd; border: 1px solid #aaa; font-family: "Noto Sans CJK KR", sans-serif; font-size: 12px; color: #333; }
.sel { height: 20px; margin-top: 6px; background: #fff; display: flex; align-items: center; justify-content: flex-end; padding-right: 3px; flex: none; }
.s1 { width: 146px; margin-left: 2px; }
.s2 { width: 147px; margin-left: 2px; }
.src { width: 60px; height: 21px; margin: 6px 0 0 4px; background: #eee; color: #e8000a; font-weight: 700; font-size: 13px; }
.and { width: 39px; height: 20px; margin: 5px 0 0 3px; background: #bdbdbd; border: 1px solid #aaa; color: #00f0f0; font-weight: 700; font-size: 13px; }
.not { width: 40px; height: 20px; margin: 5px 0 0 2px; background: #bdbdbd; border: 1px solid #aaa; color: #808080; font-weight: 700; font-size: 13px; }
.tgt { width: 60px; height: 21px; margin: 6px 0 0 3px; background: #eee; color: #1010f0; font-weight: 700; font-size: 13px; }
.run { width: 154px; height: 28px; margin: 2px 0 0 2px; background: #404040; border: 1px solid #111; color: #00f0f0; font-weight: 700; font-size: 14px; }
.clr { width: 101px; height: 28px; margin: 2px 0 0 1px; background: #bdbdbd; border: 1px solid #222; color: #0a7a0a; font-weight: 700; font-size: 14px; }
.fx { margin: 4px 0 0 12px; flex: none; }
.pb2 { align-items: flex-start; }
.one { color: #ee1111; font-size: 15px; margin: 5px 0 0 29px; width: 17px; text-align: center; }
.three { color: #222; font-size: 13px; margin: 9px 0 0 5px; font-weight: 700; width: 24px; }
.linux { width: 155px; height: 30px; margin: 1px 0 0 12px; border: 2px solid #dedede; display: flex; align-items: center; justify-content: center; color: #1a1a8c; font-size: 12px; font-family: "Noto Sans", sans-serif; }
.dash { width: 8px; height: 2px; margin-top: 14px; flex: none; }
.d1 { background: #3f8f3f; margin-left: 44px; } .d2 { background: #b03030; margin-left: 11px; } .d3 { background: #3a3ae0; margin-left: 18px; } .d4 { background: #444; margin-left: 10px; }

.doc { margin-top: 6px; flex: 1; background: #fff; display: flex; flex-direction: column; border-right: 1px solid #bbb; border-bottom: 2px solid #c8c8c8; margin-left: 1px; }
.doc-bar { height: 17px; flex: none; background: #2a3a57; display: flex; align-items: stretch; border-left: 1px solid #1c2a44; }
.doc-tab { width: 367px; flex: none; background: #fff09a; color: #222; font-size: 11.400px; line-height: 16px; padding-left: 9px; white-space: nowrap; overflow: hidden; font-family: "Noto Sans", sans-serif; }
.doc-ctl { margin-left: auto; display: flex; align-items: center; gap: 9px; color: #8a94a6; font-size: 11px; padding-right: 2px; }
.seg { display: flex; flex: none; }
.tagrow { height: 14px; }
.trow { height: 21.670px; font-family: "Liberation Serif", serif; font-size: 18px; line-height: 20px; color: #333; white-space: nowrap; letter-spacing: .2px; }
.num { width: 20px; flex: none; border-right: 1px solid #cfcfcf; font-family: "Liberation Sans", sans-serif; font-size: 11px; letter-spacing: 0; text-align: right; padding-right: 3px; line-height: 24px; color: #444; }
.srcc { width: 802px; flex: none; padding-left: 5px; overflow: hidden; }
.gapc { width: 5px; flex: none; background: #fff; border-right: 1px solid #d4d4d4; }
.stc { width: 82px; flex: none; padding-left: 2px; border-right: 1px solid #d4d4d4; display: flex; align-items: flex-start; }
.tgtc { width: 798px; flex: none; padding-left: 6px; overflow: hidden; }
.pc { width: 45px; flex: none; background: #c0c0c0; border-top: 1px solid #e4e4e4; font-family: "Liberation Sans", sans-serif; font-size: 10px; text-align: center; letter-spacing: 0; line-height: 14px; color: #333; border-left: 1px solid #d4d4d4; padding-right: 0; }
.pc.blank { background: #fff; border-top: 0; }
.cur { background: #aeecec; }
.alt { background: #ebebeb; }
.tag { display: block; width: 214px; height: 14px; background: #ec9a5a; color: #fdebd6; font-size: 10px; line-height: 14px; white-space: nowrap; letter-spacing: 0; font-family: "Liberation Sans", sans-serif; }
.right { padding-left: 4px; clip-path: polygon(0 0, 96% 0, 100% 50%, 96% 100%, 0 100%); }
.left { padding-left: 9px; clip-path: polygon(4% 0, 100% 0, 100% 100%, 4% 100%, 0 50%); }

.status { height: 18px; flex: none; border-top: 1px solid #8faadc; display: flex; align-items: center; justify-content: flex-end; font-family: "Liberation Sans", sans-serif; font-size: 12px; color: #333; padding-right: 1px; white-space: nowrap; }
.s-all { margin-left: 3px; font-size: 12.500px; } .s-ins { margin-left: 6px; } .s-doc { margin-left: 7px; } .s-t { margin-left: 4px; font-size: 11px; letter-spacing: -.25px; }
.s-p1 { margin-left: 9px; } .s-p2 { margin-left: 11px; } .s-box { margin-left: 11px; } .s-chars { margin-left: 4px; font-size: 12px; }
.s-flags { margin-left: 8px; } .s-grip { margin-left: 9px; }

.word {
  position: absolute; left: 230px; top: 327px; width: 1084px; height: 409px; background: #e3e3e3; border: 1px solid #555;
  box-shadow: 2px 3px 8px rgba(0,0,0,.35); display: flex; flex-direction: column;
  font-family: "Noto Sans CJK KR", "Noto Sans", sans-serif; font-size: 11.500px; color: #444;
}
.w-title { height: 26px; flex: none; display: flex; align-items: stretch; }
.w-ic { margin: 5px 0 0 9px; flex: none; }
.w-name { width: 676px; flex: none; padding-left: 145px; line-height: 26px; white-space: nowrap; font-size: 11.800px; color: #555; font-family: "Liberation Sans", "Noto Sans CJK KR", sans-serif; }
.w-ctx { width: 132px; flex: none; background: #fff9e5; border-top: 4px solid #f5c518; text-align: center; line-height: 21px; color: #a0802a; font-size: 12px; letter-spacing: 1px; }
.w-ctrl { margin-left: auto; display: flex; padding-right: 1px; }
.w-ctrl i { width: 27.500px; display: flex; align-items: center; justify-content: center; }
.wq { font-weight: 700; font-size: 13px; color: #666; font-family: "Liberation Sans", sans-serif; }
.w-tabs { height: 23px; flex: none; display: flex; align-items: stretch; }
.wfile { width: 56px; background: #2b2b2b; color: #fff; text-align: center; line-height: 23px; flex: none; }
.wt { line-height: 23px; text-align: center; white-space: nowrap; flex: none; }
.wt80 { width: 80px; } .wt78 { width: 78px; } .wt76 { width: 76px; } .wr { text-align: right; padding-right: 3px; } .wt84 { width: 84px; } .wt88 { width: 88px; }
.wt74 { width: 74px; } .wt26 { width: 26px; } .wt72 { width: 72px; } .wt54 { width: 54px; margin-right: 14px; }
.wc1 { width: 58px; background: #fff9e5; } .wc2 { width: 74px; background: #fff9e5; }
.wlogin { margin-left: auto; font-size: 11.500px; padding-right: 1px; line-height: 15px; }
.w-tools { height: 54px; flex: none; display: flex; padding-top: 8px; align-items: flex-start; }
.w-tools i { width: 27px; height: 22px; flex: none; display: flex; align-items: center; justify-content: center; }
.w-body { flex: 1; display: flex; min-height: 0; border-top: 1px solid #a0a0a0; }
.w-page { flex: 1; display: flex; flex-direction: column; min-width: 0; }
.w-gutter { width: 17px; flex: none; background: linear-gradient(180deg, #e0e0e0, #bdbdbd); }
.w-doc { flex: 1; background: #fff; position: relative; padding: 62px 0 0 20.500px; border-bottom: 1px solid #ccc; }
.w-margin { position: absolute; left: 29px; top: 31px; width: 1px; height: 31px; background: #c8c8c8; }
.w-handle { position: absolute; left: -20px; top: 19px; width: 11px; height: 11px; border: 1px solid #aaa; display: flex; align-items: center; justify-content: center; }
.w-table { border-collapse: collapse; table-layout: fixed; width: 1020px; font-family: "Noto Sans", sans-serif; font-size: 18px; color: #111; }
.c1 { width: 121.500px; } .c2 { width: 154.500px; } .c3 { width: 371.500px; } .c4 { width: 372.500px; }
.w-table th, .w-table td { border: 1.200px solid #333; height: 34px; padding: 0 0 0 9.500px; font-weight: 400; text-align: left; white-space: nowrap; overflow: hidden; letter-spacing: .1px; word-spacing: 2px; position: relative; }
.w-table th { background: #8db3e2; }
.w-table u { text-decoration: underline wavy #e8000a 1px; text-underline-offset: 3px; }
.caret { position: absolute; left: 9px; top: 0; bottom: 0; width: 1px; background: #a08050; }
.w-resize { position: absolute; left: 1041px; top: 198px; width: 8px; height: 8px; border: 1px solid #999; background: #fff; }
.w-scroll { height: 14px; flex: none; display: flex; align-items: stretch; background: #ececec; }
.sb-arrow { width: 14px; margin-left: 2px; flex: none; background: #f2f2f2; color: #777; font-size: 9px; text-align: center; line-height: 13px; }
.sb-thumb { width: 43px; flex: none; background: #a5a5a5; }
.sb-track { width: 765px; flex: none; background: #fff; }
.sb-rest { width: 227px; flex: none; background: #a5a5a5; }
.ar { margin-left: 0; width: 12px; }
.w-status { height: 22px; flex: none; background: #333; color: #e8e8e8; display: flex; align-items: center; font-size: 12px; position: relative; }
.ws1 { margin-left: 7px; } .ws2 { margin-left: 20px; } .ws3 { margin-left: 20px; } .ws4 { margin-left: 17px; } .ws5 { margin-left: 13px; }
.ws-right { margin-left: auto; display: flex; align-items: center; height: 22px; padding-right: 17px; }
.wsb { margin-right: 10px; }
.wsact { width: 36px; height: 22px; background: #000; display: flex; align-items: center; justify-content: center; }
.wsw { margin-left: 10px; }
.wsm { margin-left: 15px; width: 10px; font-weight: 700; font-size: 14px; }
.wslider { width: 94px; height: 1px; background: #eee; position: relative; margin-left: 1px; }
.wslider b { position: absolute; left: 48px; top: -5px; width: 4px; height: 11px; background: #eee; display: block; }
.wsp { margin-left: 3px; width: 14px; font-weight: 700; font-size: 14px; text-align: center; }
.wsz { margin-left: 12px; font-family: "Noto Sans", sans-serif; letter-spacing: .5px; font-size: 11.500px; }

.annot { position: absolute; left: -1px; top: -1px; pointer-events: none; }
</style>
